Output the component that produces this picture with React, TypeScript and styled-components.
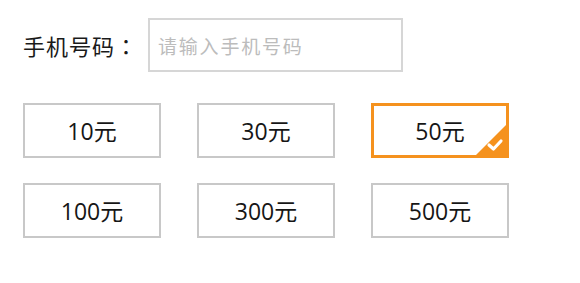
import React, { useState } from 'react';
import styled, { createGlobalStyle } from 'styled-components';

const GlobalStyle = createGlobalStyle`
  html, body {
    margin: 0;
    padding: 0;
    background: #fff;
  }
  body {
    font-family: "Open Sans", "Noto Sans CJK SC", sans-serif;
    color: #222;
  }
`;

const Page = styled.div`
  padding: 18px 0 0 23px;
`;

const PhoneRow = styled.div`
  display: flex;
  align-items: center;
`;

const Label = styled.label`
  width: 125px;
  font-family: "Noto Sans CJK JP", "Noto Sans CJK SC", sans-serif;
  font-size: 22px;
  letter-spacing: 1px;
  color: #1a1a1a;
  white-space: nowrap;
`;

const PhoneInput = styled.input`
  box-sizing: border-box;
  width: 255px;
  height: 54px;
  border: 2px solid #d6d6d6;
  padding: 0 8px;
  font-family: "Noto Sans CJK SC", sans-serif;
  font-size: 19px;
  letter-spacing: 1.8px;
  outline: none;
  &::placeholder {
    color: #bcbcbc;
  }
`;

const Grid = styled.div`
  display: grid;
  grid-template-columns: repeat(3, 138px);
  column-gap: 36px;
  row-gap: 25px;
  margin-top: 31px;
`;

const Option = styled.button<{ $active: boolean }>`
  position: relative;
  box-sizing: border-box;
  height: 55px;
  padding: 0 0 2px;
  background: #fff;
  border: ${p => (p.$active ? '3px solid #f5921e' : '2px solid #c8c8c8')};
  font-family: "Open Sans", "Noto Sans CJK SC", sans-serif;
  font-size: 23px;
  color: #161616;
  cursor: pointer;
  overflow: hidden;
`;

const Corner = styled.svg`
  position: absolute;
  right: 0;
  bottom: 0;
  width: 30px;
  height: 30px;
`;

const amounts = [10, 30, 50, 100, 300, 500];

export default function App() {
  const [selected, setSelected] = useState(50);
  return (
    <>
      <GlobalStyle />
      <Page>
        <PhoneRow>
          <Label>手机号码：</Label>
          <PhoneInput placeholder="请输入手机号码" />
        </PhoneRow>
        <Grid>
          {amounts.map(a => (
            <Option key={a} $active={a === selected} onClick={() => setSelected(a)}>
              {a}元
              {a === selected && (
                <Corner viewBox="0 0 30 30">
                  <polygon points="30,0 30,30 0,30" fill="#f5921e" />
                  <polyline
                    points="13,20 17.5,24 25,16"
                    fill="none"
                    stroke="#fff"
                    strokeWidth="3.2"
                    strokeLinecap="round"
                    strokeLinejoin="round"
                  />
                </Corner>
              )}
            </Option>
          ))}
        </Grid>
      </Page>
    </>
  );
}
